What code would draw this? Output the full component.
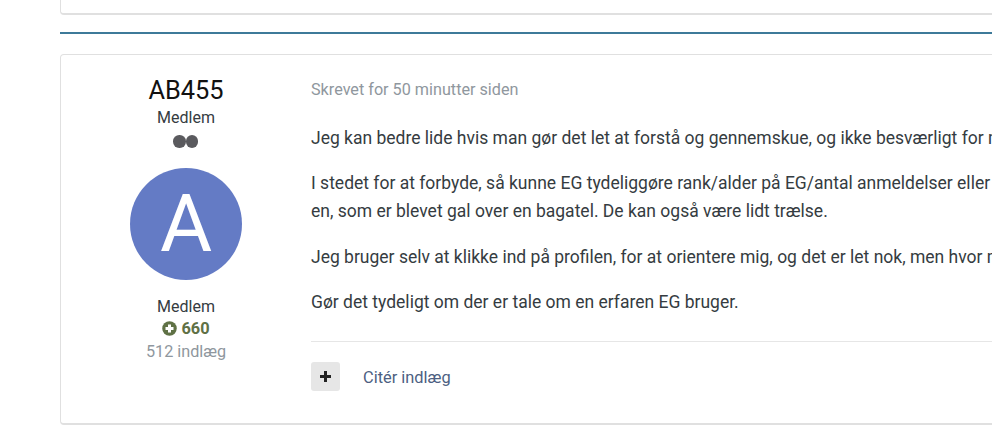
<style>
:global(body) { margin: 0; background: #fff; }
:global(html), :global(body) { overflow: hidden; }
.page { width: 992px; height: 440px; overflow: hidden; padding-left: 60px; box-sizing: border-box; font-family: Roboto, sans-serif; color: #353c41; font-size: 16px; }
.inner { width: 1100px; }
.prev { height: 15px; box-sizing: border-box; border: 1px solid #e0e0e0; border-top: 0; border-bottom-width: 2px; border-radius: 0 0 4px 4px; background: #fff; }
.sep { height: 2px; background: #3d7a99; margin: 17px 0 20px; }
.post { display: flex; height: 371px; box-sizing: border-box; border: 1px solid #e0e0e0; border-bottom-width: 2px; border-radius: 4px; background: #fff; }
.author { width: 250px; flex: none; display: flex; flex-direction: column; align-items: center; box-sizing: border-box; padding-top: 19px; }
.name { font-size: 25.4px; line-height: 32px; color: #111; }
.rank { line-height: 22px; margin-top: 1px; }
.pips { display: flex; height: 12px; margin-top: 6px; padding-right: 1px; }
.pips i { width: 12.5px; height: 12.5px; border-radius: 50%; background: #5a5a5e; }
.avatar { width: 112px; height: 112px; margin-top: 21px; border-radius: 50%; background: #647bc5; color: #fff; font-size: 80px; line-height: 112px; text-align: center; }
.group { line-height: 22px; margin-top: 16px; }
.rep { display: flex; align-items: center; gap: 4px; font-size: 16.4px; line-height: 22px; font-weight: 700; color: #5f7145; }
.rep svg { margin-bottom: 2px; }
.count { font-size: 16.2px; line-height: 23px; color: #8f979e; }
.body { flex: 1; min-width: 0; }
.date { margin: 24px 0 0; font-size: 16.2px; line-height: 22px; color: #8f979e; }
.text { margin-top: 23px; font-size: 17.5px; line-height: 28px; }
.text p { margin: 0 0 17.25px; white-space: nowrap; }
.foot { display: flex; align-items: center; gap: 23px; margin-top: 24.75px; padding-top: 20px; border-top: 1px solid #e6e6e6; }
.plus { width: 29px; height: 29px; display: flex; align-items: center; justify-content: center; border-radius: 3px; background: #e6e6e6; border: 0; padding: 0; }
.cite { color: #4d5f82; font-size: 16.4px; line-height: 29px; padding-top: 1px; }
</style>

<div class="page">
  <div class="inner">
    <div class="prev"></div>
    <div class="sep"></div>
    <article class="post">
      <aside class="author">
        <div class="name">AB455</div>
        <div class="rank">Medlem</div>
        <div class="pips"><i></i><i></i></div>
        <div class="avatar">A</div>
        <div class="group">Medlem</div>
        <div class="rep">
          <svg width="15" height="15" viewBox="0 0 15 15"><circle cx="7.5" cy="7.5" r="7.25" fill="#5f7145"/><path d="M7.5 3.5v8M3.5 7.5h8" stroke="#fff" stroke-width="3"/></svg>
          <span>660</span>
        </div>
        <div class="count">512 indlæg</div>
      </aside>
      <div class="body">
        <p class="date">Skrevet for 50 minutter siden</p>
        <div class="text">
          <p>Jeg kan bedre lide hvis man gør det let at forstå og gennemskue, og ikke besværligt for mig.</p>
          <p>I stedet for at forbyde, så kunne EG tydeliggøre rank/alder på EG/antal anmeldelser eller<br>en, som er blevet gal over en bagatel. De kan også være lidt trælse.</p>
          <p>Jeg bruger selv at klikke ind på profilen, for at orientere mig, og det er let nok, men hvor mange</p>
          <p>Gør det tydeligt om der er tale om en erfaren EG bruger.</p>
        </div>
        <div class="foot">
          <button class="plus" aria-label="Tilføj">
            <svg width="13" height="13" viewBox="0 0 13 13"><path d="M6.5 1v11M1 6.5h11" stroke="#222" stroke-width="3"/></svg>
          </button>
          <span class="cite">Citér indlæg</span>
        </div>
      </div>
    </article>
  </div>
</div>
